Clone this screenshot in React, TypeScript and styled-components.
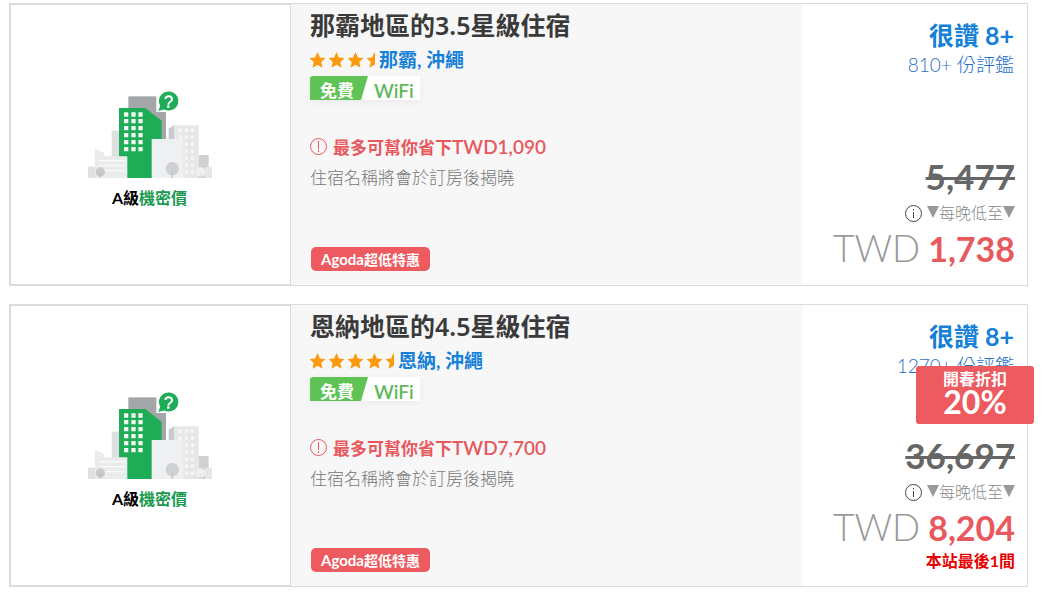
import React from "react";
import styled, { createGlobalStyle } from "styled-components";

const GlobalStyle = createGlobalStyle`
  *, *::before, *::after { box-sizing: border-box; }
  body {
    margin: 0;
    background: #fff;
    font-family: Lato, "Noto Sans CJK TC", sans-serif;
    color: #333;
  }
  h2, p, ul { margin: 0; padding: 0; }
  a { color: inherit; text-decoration: none; }
`;

const HotelList = styled.ul`
  list-style: none;
  display: flex;
  flex-direction: column;
  gap: 18px;
  padding: 3px 14px 14px 9px;
`;

const Card = styled.li`
  position: relative;
  display: flex;
  min-height: 283px;
  border: 1px solid #dcdcdc;
  background: #fff;
`;

const Picture = styled.div`
  flex: 0 0 281px;
  display: flex;
  flex-direction: column;
  align-items: center;
  padding: 85px 2px 0 0;
  border: 1px solid #d8d8d8;
`;

const Caption = styled.p`
  margin-top: 8px;
  font-size: 16px;
  line-height: 24px;
  font-weight: 700;
  color: #000;
`;

const Green = styled.span`
  color: #1a9a50;
`;

const Details = styled.div`
  flex: 1;
  min-width: 0;
  display: flex;
  flex-direction: column;
  align-items: flex-start;
  padding: 0 19px 14px;
  background: #f7f7f7;
`;

const Title = styled.h2`
  font-family: "Noto Sans", "Noto Sans CJK TC", sans-serif;
  font-size: 25px;
  line-height: 42px;
  font-weight: 600;
  color: #3a3a3a;
`;

const StarRow = styled.div`
  display: flex;
  align-items: center;
  height: 24px;
  margin-top: 2px;
`;

const Stars = styled.span<{ $width: number }>`
  display: flex;
  flex: none;
  gap: 4px;
  width: ${(p) => p.$width}px;
  overflow: hidden;
  margin-right: 4px;

  svg { flex: none; }
`;

const Place = styled.a`
  font-size: 19px;
  line-height: 24px;
  font-weight: 700;
  color: #1580d8;
`;

const Wifi = styled.div`
  display: flex;
  height: 24px;
  margin-top: 4px;
  overflow: hidden;
  border-radius: 3px 0 0 0;
  background: #fff;
  box-shadow: 0 2px 8px rgba(0, 0, 0, 0.06);
  line-height: 30px;
`;

const WifiFree = styled.span`
  width: 58px;
  padding-left: 10px;
  background: #5fc356;
  clip-path: polygon(0 0, 100% 0, 51px 100%, 0 100%);
  font-size: 17px;
  font-weight: 700;
  color: #fff;
`;

const WifiName = styled.span`
  padding: 0 6px;
  font-size: 19px;
  font-weight: 600;
  color: #62b85b;
`;

const Saving = styled.p`
  display: flex;
  align-items: center;
  gap: 6px;
  margin-top: 32px;
  font-size: 17px;
  line-height: 30px;
  font-weight: 700;
  color: #e8585d;
`;

const Amount = styled.span`
  font-size: 19px;
  font-weight: 600;
`;

const Reveal = styled.p`
  font-size: 17px;
  line-height: 30px;
  font-weight: 300;
  color: #777;
`;

const Tag = styled.span`
  margin-top: auto;
  margin-left: 1px;
  padding: 0 10px;
  border-radius: 5px;
  background: #ed5a5f;
  font-size: 14px;
  line-height: 25px;
  height: 24px;
  font-weight: 700;
  color: #fff;
`;

const Brand = styled.span`
  font-size: 15px;
`;

const Side = styled.div`
  flex: 0 0 225px;
  display: flex;
  flex-direction: column;
  align-items: flex-end;
  padding: 16px 12px 14px 0;
  text-align: right;
`;

const Score = styled.p`
  padding-right: 1px;
  font-size: 25px;
  line-height: 30px;
  font-weight: 700;
  color: #1580d8;
`;

const Reviews = styled.a`
  padding-right: 1px;
  font-size: 19px;
  line-height: 30px;
  font-weight: 300;
  color: #1f70c8;
`;

const OldPrice = styled.del`
  margin-top: auto;
  font-size: 35px;
  line-height: 44px;
  font-weight: 700;
  color: #666;
  text-decoration-thickness: 3px;
`;

const Nightly = styled.div`
  display: flex;
  align-items: center;
  height: 28px;
  font-size: 16px;
  font-weight: 300;
  color: #888;
`;

const InfoButton = styled.button`
  display: flex;
  margin: 2px 5px 0 0;
  padding: 0;
  border: 0;
  background: none;
  color: #444;
`;

const Price = styled.p`
  display: flex;
  align-items: baseline;
  gap: 8px;
  font-size: 34px;
  line-height: 44px;
  font-weight: 700;
  color: #e8595e;
`;

const Currency = styled.span`
  font-size: 37px;
  font-weight: 300;
  color: #999;
`;

const LastRoom = styled.p`
  font-size: 16px;
  line-height: 22px;
  font-weight: 700;
  color: #e60000;
`;

const Discount = styled.div`
  position: absolute;
  top: 61px;
  right: -7px;
  display: flex;
  flex-direction: column;
  width: 118px;
  height: 58px;
  padding-top: 3px;
  border-radius: 3px;
  background: #ed5a5f;
  text-align: center;
  font-weight: 700;
  color: #fff;
`;

const DiscountName = styled.span`
  font-size: 16px;
  line-height: 20px;
`;

const DiscountRate = styled.span`
  font-size: 32px;
  line-height: 26px;
`;

const windowRows = [97, 117, 138, 159, 180, 201];
const windowColumns = [162, 184, 205];
const paleRows = [145, 166, 187, 208, 229, 250, 271];

const City = () => (
  <svg width="125" height="88" viewBox="51 30 375 264" aria-hidden="true">
    <rect x="125" y="152" width="40" height="142" fill="#dedfe1" />
    <rect x="175" y="49" width="84" height="150" fill="#a5a6a9" />
    <rect x="245" y="96" width="43" height="150" fill="#a5a6a9" />
    <path d="M296 146l16-10v158h-16z" fill="#c9cacd" />
    <path d="M312 136h74v158h-74z" fill="#e6e7e9" />
    <path d="M386 225h30v36h10v33h-40z" fill="#d0d1d3" />
    <path d="M405 261h21v33h-21z" fill="#e6e7e9" />
    {paleRows.map((y) =>
      [326, 344, 362].map((x) => (
        <rect key={`${x}-${y}`} x={x} y={y} width="10" height="11" fill="#f5f5f6" />
      ))
    )}
    <path d="M147 84h79l49 38v172H147z" fill="#1eac57" />
    {windowRows.map((y) =>
      windowColumns.map((x) => (
        <rect key={`${x}-${y}`} x={x} y={y} width="13" height="13" rx="1" fill="#effaf2" />
      ))
    )}
    <path d="M245 177h95v117h-95z" fill="#eff0f2" />
    <path d="M54 260h22v34H54z" fill="#dfe0e2" />
    <path d="M75 206l27 13v10h70v65H75z" fill="#eaebed" />
    <path d="M86 242h80M86 257h80M104 272h62" stroke="#fafafa" strokeWidth="4" />
    <circle cx="91" cy="276" r="14" fill="#c9cacc" />
    <path d="M91 276v18" stroke="#bbbcbe" strokeWidth="3" />
    <circle cx="307" cy="266" r="20" fill="#cfd0d2" />
    <path d="M307 270v24" stroke="#c4c5c7" strokeWidth="4" />
    <circle cx="392" cy="276" r="14" fill="#eff0f1" />
    <path d="M392 278v16" stroke="#dedfe1" strokeWidth="3" />
    <path
      d="M295 33a31 30 0 1 1-13 57l-19 5 6-18a31 30 0 0 1 26-44z"
      fill="#1eac57"
      stroke="#fff"
      strokeWidth="3"
    />
    <path d="M286 57q1-8 10-8 10 0 10 9 0 5-6 8-5 3-5 8" fill="none" stroke="#fff" strokeWidth="6" />
    <circle cx="295" cy="80" r="4" fill="#fff" />
  </svg>
);

const Star = () => (
  <svg width="15" height="16" viewBox="0 0 15 16" aria-hidden="true">
    <path d="M7.500 0l2.400 5.400 5.600.6-4.200 3.900 1.200 5.800-5-3-5 3 1.200-5.800L-.5 6l5.600-.6z" fill="#fb9a0e" />
  </svg>
);

const AlertIcon = () => (
  <svg width="17" height="19" viewBox="0 0 17 19" fill="none" stroke="#e8585d" aria-hidden="true">
    <circle cx="8.500" cy="8.500" r="8" />
    <path d="M8.500 3v8M8.500 12v2" />
  </svg>
);

const InfoIcon = () => (
  <svg width="17" height="17" viewBox="0 0 17 17" fill="none" stroke="currentColor" aria-hidden="true">
    <circle cx="8.500" cy="8.500" r="8" />
    <path d="M8.500 4v1.500M8.500 7v6" />
  </svg>
);

const Down = () => (
  <svg width="12" height="12" viewBox="0 0 12 12" aria-hidden="true">
    <path d="M0 0h12L6 12z" fill="#999" />
  </svg>
);

interface Hotel {
  title: string;
  stars: number;
  place: string;
  saving: string;
  reviews: string;
  oldPrice: string;
  price: string;
  discount?: { name: string; rate: string };
  lastRoom?: string;
}

const hotels: Hotel[] = [
  {
    title: "那霸地區的3.5星級住宿",
    stars: 3.5,
    place: "那霸, 沖繩",
    saving: "TWD1,090",
    reviews: "810+ 份評鑑",
    oldPrice: "5,477",
    price: "1,738",
  },
  {
    title: "恩納地區的4.5星級住宿",
    stars: 4.5,
    place: "恩納, 沖繩",
    saving: "TWD7,700",
    reviews: "1270+ 份評鑑",
    oldPrice: "36,697",
    price: "8,204",
    discount: { name: "開春折扣", rate: "20%" },
    lastRoom: "本站最後1間",
  },
];

const HotelCard = ({ hotel }: { hotel: Hotel }) => (
  <Card>
    <Picture>
      <City />
      <Caption>
        A級<Green>機密價</Green>
      </Caption>
    </Picture>
    <Details>
      <Title>
        <a href="#hotel">{hotel.title}</a>
      </Title>
      <StarRow>
        <Stars
          role="img"
          aria-label={`${hotel.stars} stars`}
          $width={Math.floor(hotel.stars) * 19 + 8}
        >
          {Array.from({ length: Math.ceil(hotel.stars) }, (_, i) => (
            <Star key={i} />
          ))}
        </Stars>
        <Place href="#map">{hotel.place}</Place>
      </StarRow>
      <Wifi>
        <WifiFree>免費</WifiFree>
        <WifiName>WiFi</WifiName>
      </Wifi>
      <Saving>
        <AlertIcon />
        <span>
          最多可幫你省下<Amount>{hotel.saving}</Amount>
        </span>
      </Saving>
      <Reveal>住宿名稱將會於訂房後揭曉</Reveal>
      <Tag>
        <Brand>Agoda</Brand>超低特惠
      </Tag>
    </Details>
    <Side>
      <Score>很讚 8+</Score>
      <Reviews href="#reviews">{hotel.reviews}</Reviews>
      <OldPrice>{hotel.oldPrice}</OldPrice>
      <Nightly>
        <InfoButton type="button" aria-label="info">
          <InfoIcon />
        </InfoButton>
        <Down />
        每晚低至
        <Down />
      </Nightly>
      <Price>
        <Currency>TWD</Currency>
        {hotel.price}
      </Price>
      {hotel.lastRoom && <LastRoom>{hotel.lastRoom}</LastRoom>}
    </Side>
    {hotel.discount && (
      <Discount>
        <DiscountName>{hotel.discount.name}</DiscountName>
        <DiscountRate>{hotel.discount.rate}</DiscountRate>
      </Discount>
    )}
  </Card>
);

export default function App() {
  return (
    <>
      <GlobalStyle />
      <main>
        <HotelList>
          {hotels.map((hotel) => (
            <HotelCard key={hotel.title} hotel={hotel} />
          ))}
        </HotelList>
      </main>
    </>
  );
}
